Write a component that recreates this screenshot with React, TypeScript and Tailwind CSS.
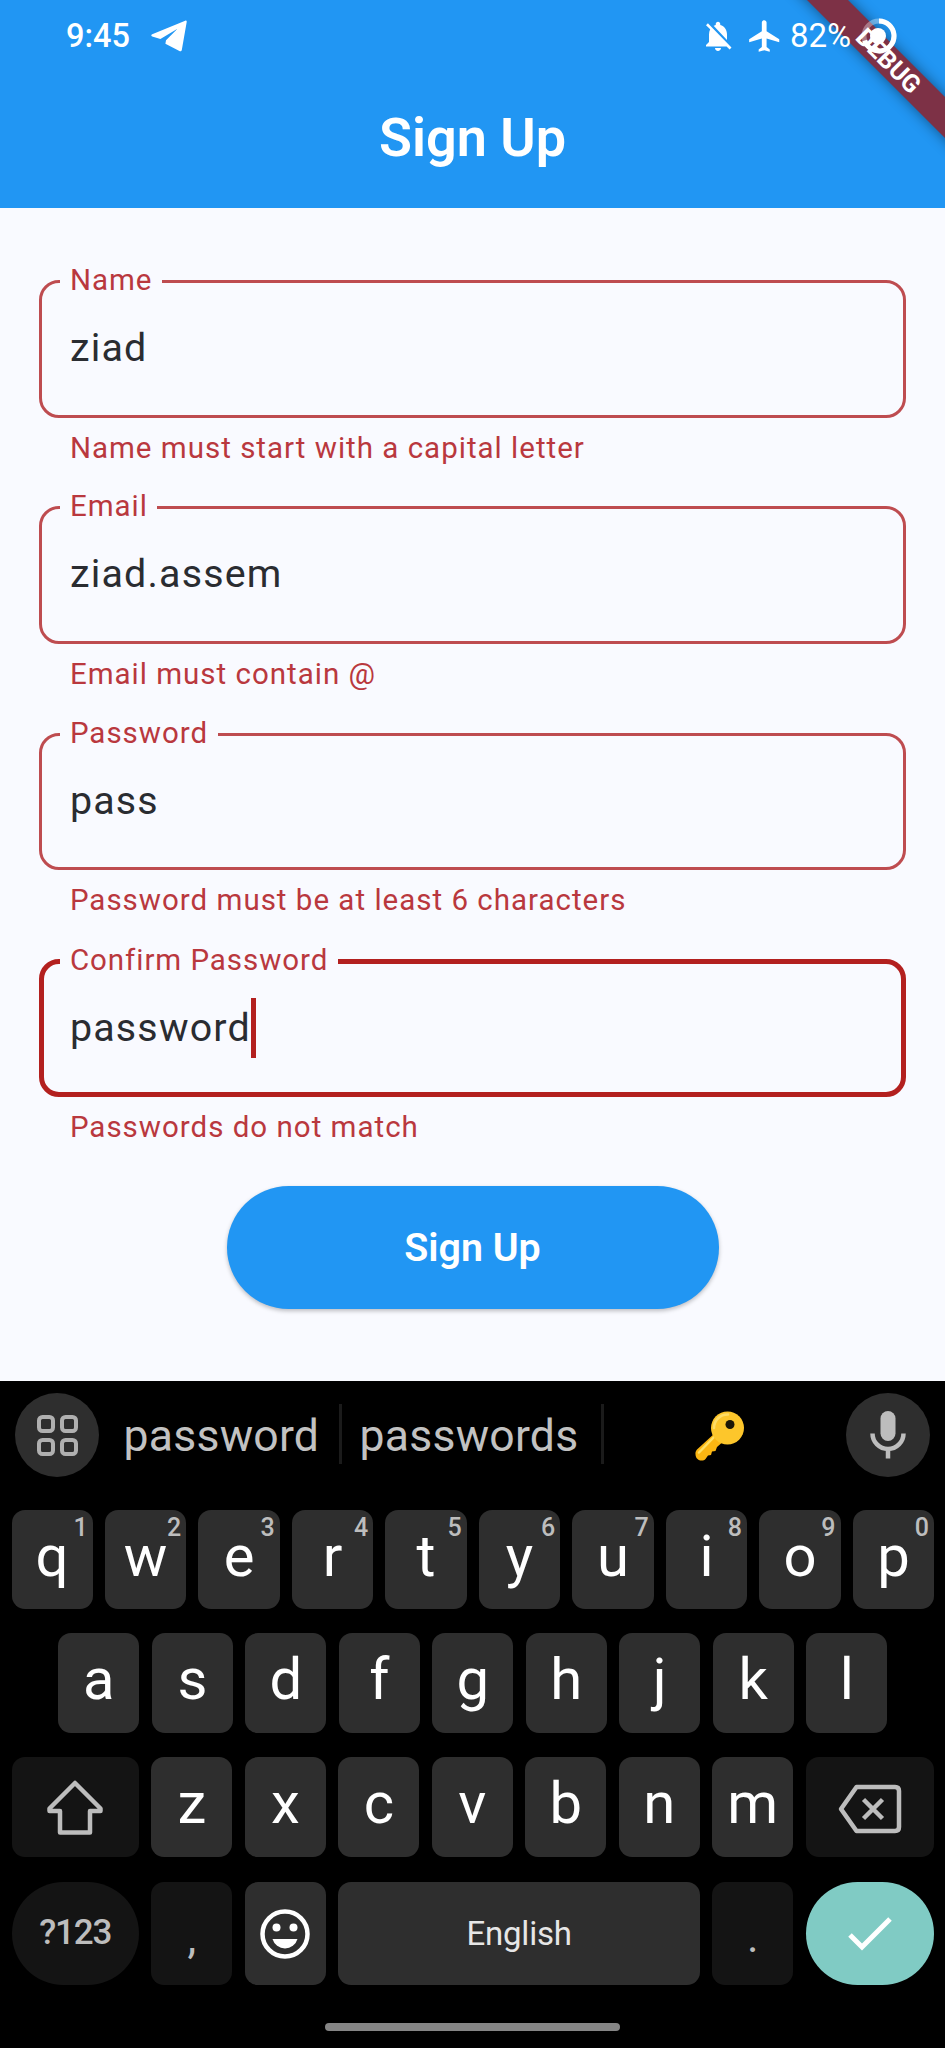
import type { ReactNode } from "react";

type FieldProps = { label: string; value: string; error: string; focused?: boolean };

function Field({ label, value, error, focused }: FieldProps) {
  return (
    <div className="flex h-[226.4px] flex-col">
      <fieldset
        className={
          focused
            ? "h-[137.5px] rounded-[20px] border-[5px] border-[#b3201f] pl-[16px]"
            : "h-[137.5px] rounded-[20px] border-[3px] border-[#be4c50] pl-[18px]"
        }
      >
        <legend
          className={
            focused
              ? "h-[5px] px-[9.5px] text-[29.5px] leading-[2px] tracking-[0.95px] text-[#b9383e]"
              : "h-[3px] px-[9.5px] text-[29.5px] leading-[0px] tracking-[1px] text-[#b9383e]"
          }
        >
          {label}
        </legend>
        <div className={focused ? "flex items-center pt-[34px] pl-[9.5px]" : "flex items-center pt-[36px] pl-[9.5px]"}>
          <span className="text-[39.4px] leading-[58px] tracking-[1.2px] text-[#2a2c31]">{value}</span>
          {focused && <span className="h-[60px] w-[5px] bg-[#b3201f]" />}
        </div>
      </fieldset>
      <p className="pt-[12px] pl-[30.5px] text-[29.5px] leading-[36px] tracking-[1px] text-[#b9383e]">{error}</p>
    </div>
  );
}

function LetterKey({ letter, hint }: { letter: string; hint?: string }) {
  return (
    <div className="relative flex w-[81.2px] justify-center rounded-[13px] bg-[#2e2e2e] pt-[10px] text-white">
      <span className="text-[58px] leading-[72px]">{letter}</span>
      {hint && (
        <span className="absolute top-[3px] right-[5px] text-[25px] leading-[30px] font-medium text-[#bdbdbd]">
          {hint}
        </span>
      )}
    </div>
  );
}

function DarkKey({ className, children }: { className: string; children: ReactNode }) {
  return <div className={`flex items-center justify-center bg-[#141414] text-[#bdbdbd] ${className}`}>{children}</div>;
}

function StatusBar() {
  return (
    <div className="flex h-[72px] items-center pl-[66px] text-white">
      <span className="w-[64px] text-[32.5px] leading-[40px] font-medium">9:45</span>
      <svg className="ml-[21px] h-[32px] w-[36px]" viewBox="0 0 36 32" fill="currentColor">
        <path d="M34.2.7 1.2 14.2c-1.300.5-1.200 1.800 0 2.300l8.200 2.600L26.500 8.700 15 20.300l-.6 3.400 14 7.400c1.300.6 2.100.1 2.400-1.200L35.700 2c.200-1.200-.500-1.700-1.500-1.300z" />
      </svg>
      <svg className="ml-[513px] h-[36px] w-[36px]" viewBox="0 0 24 24" fill="currentColor">
        <path d="M20 18.690 7.840 6.140 5.270 3.490 4 4.760l2.800 2.800v.010c-.520.990-.800 2.160-.800 3.420v5l-2 2v1h13.730l2 2L21 19.720l-1-1.030zM12 22c1.110 0 2-.890 2-2h-4c0 1.110.890 2 2 2zm6-7.320V11c0-3.080-1.640-5.640-4.500-6.320V4c0-.830-.670-1.500-1.500-1.500s-1.500.670-1.500 1.500v.680c-.150.030-.290.080-.420.120-.100.030-.200.070-.300.110h-.010c-.010 0-.010 0-.020.010-.230.090-.460.200-.680.310 0 0-.010 0-.010.010L18 14.680z" />
      </svg>
      <svg className="ml-[10px] h-[38px] w-[38px]" viewBox="0 0 24 24" fill="currentColor">
        <path d="M21 16v-2l-8-5V3.500c0-.830-.670-1.500-1.500-1.500S10 2.670 10 3.500V9l-8 5v2l8-2.500V19l-2 1.500V22l3.500-1 3.500 1v-1.500L13 19v-5.500l8 2.500z" />
      </svg>
      <span className="ml-[6px] w-[61px] text-[33px] leading-[40px]">82%</span>
      <svg className="ml-[10px] h-[36px] w-[36px]" viewBox="0 0 36 36" fill="none">
        <circle cx="18" cy="18" r="15" stroke="#fff" strokeOpacity="0.35" strokeWidth="5" />
        <path d="M18 3A15 15 0 1 1 3.700 22.500" stroke="#fff" strokeWidth="5" />
        <circle cx="17" cy="18" r="8" fill="#fff" />
      </svg>
    </div>
  );
}

function DebugBanner() {
  return (
    <div className="absolute top-0 right-0 h-[207px] w-[207px] overflow-hidden">
      <div className="absolute top-[44.500px] left-[29px] flex h-[29px] w-[240px] rotate-45 items-center justify-center bg-[#7d3146] pl-[4px] text-[25px] leading-[29px] font-bold text-white shadow-[0_0_14px_rgba(0,0,0,0.45)]">
        DEBUG
      </div>
    </div>
  );
}

function KeyEmoji() {
  return (
    <svg className="h-[50px] w-[50px]" viewBox="0 0 50 50">
      <path
        d="M20 22 2 38.500C0 40.500 0 44 1.500 47c2 3 7 3.500 9 1l2.500-3.500 3-.5 1-3.500 3.500-.5 1.500-4 8-7z"
        fill="#fbb612"
      />
      <path d="M20 25 4 41.500" stroke="#ffe066" strokeWidth="2.500" strokeLinecap="round" />
      <circle cx="32.500" cy="17" r="16.500" fill="#fdc62b" />
      <path d="M19 17A13.500 13.500 0 0 1 33 3.500" stroke="#ffdd66" strokeWidth="2.500" fill="none" strokeLinecap="round" />
      <circle cx="35" cy="13.500" r="4.500" fill="#1c1606" />
    </svg>
  );
}

function Keyboard() {
  return (
    <div className="flex h-[667px] flex-col bg-black">
      <div className="flex h-[109px] items-start pt-[12px] pl-[15px]">
        <div className="flex h-[84px] w-[84px] items-center justify-center rounded-full bg-[#2e2e2e]">
          <svg className="h-[41px] w-[41px]" viewBox="0 0 41 41" fill="none" stroke="#b0b0b0" strokeWidth="4">
            <rect x="2" y="2" width="14" height="14" rx="3.500" />
            <rect x="25" y="2" width="14" height="14" rx="3.500" />
            <rect x="2" y="25" width="14" height="14" rx="3.500" />
            <rect x="25" y="25" width="14" height="14" rx="3.500" />
          </svg>
        </div>
        <span className="w-[239.500px] pt-[13px] pl-[24.500px] text-[44.500px] leading-[60px] tracking-[0.25px] text-[#c2c2c2]">
          password
        </span>
        <span className="mt-[11px] h-[60px] w-[3px] bg-[#1b1b1b]" />
        <span className="w-[259px] pt-[13px] pl-[18px] text-[44.500px] leading-[60px] tracking-[0.25px] text-[#c2c2c2]">
          passwords
        </span>
        <span className="mt-[11px] h-[60px] w-[3px] bg-[#1b1b1b]" />
        <span className="flex w-[242.500px] pt-[18px] pl-[91.500px]">
          <KeyEmoji />
        </span>
        <div className="flex h-[84px] w-[84px] items-center justify-center rounded-full bg-[#2e2e2e]">
          <svg className="h-[50px] w-[38px]" viewBox="0 0 38 50" fill="none" stroke="#bdbdbd">
            <rect x="11.500" y="1" width="15" height="30" rx="7.500" fill="#bdbdbd" stroke="none" />
            <path d="M3.500 23.500a15.500 15.500 0 0 0 31 0M19 39v9.500" strokeWidth="4.500" />
          </svg>
        </div>
      </div>

      <div className="mt-[20px] flex h-[99px] gap-[12.300px] pl-[11.500px]">
        {["q", "w", "e", "r", "t", "y", "u", "i", "o", "p"].map((k, i) => (
          <LetterKey key={k} letter={k} hint={String((i + 1) % 10)} />
        ))}
      </div>
      <div className="mt-[24px] flex h-[100px] gap-[12.300px] pl-[58.300px]">
        {["a", "s", "d", "f", "g", "h", "j", "k", "l"].map((k) => (
          <LetterKey key={k} letter={k} />
        ))}
      </div>
      <div className="mt-[24px] flex h-[100px] gap-[12.300px] pl-[11.500px]">
        <DarkKey className="w-[127.500px] rounded-[13px]">
          <svg className="h-[56px] w-[58px]" viewBox="0 0 58 56" fill="none" stroke="#bdbdbd" strokeWidth="4.500" strokeLinejoin="round">
            <path d="M29 4 3.500 29.500V32H14v21.500h30V32h10.500v-2.500z" />
          </svg>
        </DarkKey>
        {["z", "x", "c", "v", "b", "n", "m"].map((k) => (
          <LetterKey key={k} letter={k} />
        ))}
        <DarkKey className="w-[128px] rounded-[13px]">
          <svg className="mt-[4px] h-[50px] w-[64px]" viewBox="0 0 64 50" fill="none" stroke="#bdbdbd" strokeWidth="4.500" strokeLinejoin="round">
            <path d="M18.500 3H57q4 0 4 4v36q0 4-4 4H18.500L3 25z" />
            <path d="m25.500 15.500 19 19M44.500 15.500l-19 19" />
          </svg>
        </DarkKey>
      </div>
      <div className="mt-[25px] flex h-[103px] gap-[12.300px] pl-[11.500px]">
        <DarkKey className="w-[127.500px] rounded-full text-[35px] font-medium tracking-[-1.200px]">?123</DarkKey>
        <DarkKey className="w-[81.200px] rounded-[13px] pt-[8px] text-[44px]">,</DarkKey>
        <div className="flex w-[81.200px] items-center justify-center rounded-[13px] bg-[#2e2e2e]">
          <svg className="h-[50px] w-[50px]" viewBox="0 0 50 50" fill="#fff">
            <circle cx="25" cy="25" r="22.500" fill="none" stroke="#fff" strokeWidth="4.500" />
            <circle cx="16.500" cy="18.500" r="4" />
            <circle cx="33.500" cy="18.500" r="4" />
            <path d="M12.500 30h25a13 13 0 0 1-25 0z" />
          </svg>
        </div>
        <div className="flex w-[361.700px] items-center justify-center rounded-[13px] bg-[#2e2e2e] text-[33px] tracking-[-0.200px] text-[#e6e6e6]">
          English
        </div>
        <DarkKey className="w-[81.200px] rounded-[13px] pt-[6px] text-[44px]">.</DarkKey>
        <div className="flex w-[128.500px] items-center justify-center rounded-full bg-[#80cbc4]">
          <svg className="h-[34px] w-[44px]" viewBox="0 0 44 34" fill="none" stroke="#fff" strokeWidth="5">
            <path d="M2 18 14 30 42 2" />
          </svg>
        </div>
      </div>
      <div className="mt-[38px] ml-[325px] h-[8px] w-[295px] rounded-full bg-[#858585]" />
    </div>
  );
}

export default function App() {
  return (
    <div className="flex h-[2048px] w-[945px] flex-col overflow-hidden bg-[#f9faff] font-['Roboto',sans-serif]">
      <header className="relative h-[207.500px] bg-[#2196f3]">
        <DebugBanner />
        <div className="relative">
          <StatusBar />
          <h1 className="pt-[30.500px] text-center text-[54px] leading-[70px] font-semibold text-white">Sign Up</h1>
        </div>
      </header>
      <main className="flex h-[1173.500px] flex-col px-[39.400px] pt-[72.500px]">
        <Field label="Name" value="ziad" error="Name must start with a capital letter" />
        <Field label="Email" value="ziad.assem" error="Email must contain @" />
        <Field label="Password" value="pass" error="Password must be at least 6 characters" />
        <Field label="Confirm Password" value="password" error="Passwords do not match" focused />
        <button className="h-[123px] w-[492px] self-center rounded-full bg-[#2196f3] text-[39.400px] font-semibold text-white shadow-[0_2px_4px_rgba(0,0,0,0.25)]">
          Sign Up
        </button>
      </main>
      <Keyboard />
    </div>
  );
}
